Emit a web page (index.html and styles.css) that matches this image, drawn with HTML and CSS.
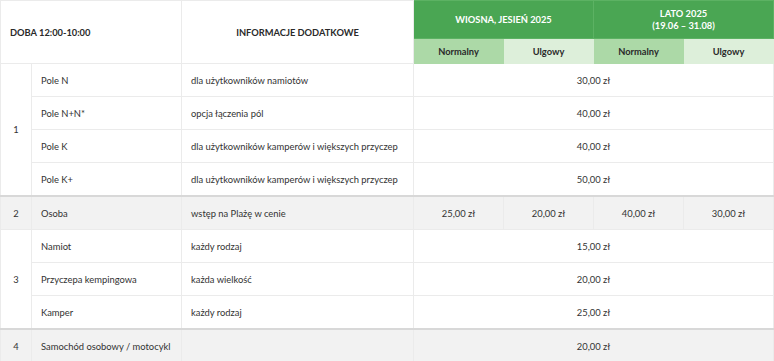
FILE: index.html
```html
<!DOCTYPE html>
<html lang="pl">
<head>
<meta charset="utf-8">
<link rel="stylesheet" href="styles.css">
</head>
<body>
<table class="prices">
  <colgroup>
    <col class="c-num"><col class="c-name"><col class="c-info">
    <col class="c-price"><col class="c-price"><col class="c-price"><col class="c-price">
  </colgroup>
  <thead>
    <tr class="head-top">
      <th colspan="2" rowspan="2" class="h-left">DOBA 12:00-10:00</th>
      <th rowspan="2" class="h-info">INFORMACJE DODATKOWE</th>
      <th colspan="2" class="h-season">WIOSNA, JESIEŃ 2025</th>
      <th colspan="2" class="h-season">LATO 2025<br>(19.06 – 31.08)</th>
    </tr>
    <tr class="head-sub">
      <th class="h-norm">Normalny</th>
      <th class="h-ulg">Ulgowy</th>
      <th class="h-norm">Normalny</th>
      <th class="h-ulg">Ulgowy</th>
    </tr>
  </thead>
  <tbody>
    <tr>
      <td rowspan="4" class="num">1</td>
      <td>Pole N</td><td>dla użytkowników namiotów</td>
      <td colspan="4" class="price">30,00 zł</td>
    </tr>
    <tr><td>Pole N+N*</td><td>opcja łączenia pól</td><td colspan="4" class="price">40,00 zł</td></tr>
    <tr><td>Pole K</td><td>dla użytkowników kamperów i większych przyczep</td><td colspan="4" class="price">40,00 zł</td></tr>
    <tr><td>Pole K+</td><td>dla użytkowników kamperów i większych przyczep</td><td colspan="4" class="price">50,00 zł</td></tr>
    <tr class="alt sep">
      <td class="num">2</td><td>Osoba</td><td>wstęp na Plażę w cenie</td>
      <td class="price">25,00 zł</td><td class="price">20,00 zł</td><td class="price">40,00 zł</td><td class="price">30,00 zł</td>
    </tr>
    <tr>
      <td rowspan="3" class="num">3</td>
      <td>Namiot</td><td>każdy rodzaj</td><td colspan="4" class="price">15,00 zł</td>
    </tr>
    <tr><td>Przyczepa kempingowa</td><td>każda wielkość</td><td colspan="4" class="price">20,00 zł</td></tr>
    <tr><td>Kamper</td><td>każdy rodzaj</td><td colspan="4" class="price">25,00 zł</td></tr>
    <tr class="alt sep last">
      <td class="num">4</td><td>Samochód osobowy / motocykl</td><td></td>
      <td colspan="4" class="price">20,00 zł</td>
    </tr>
  </tbody>
</table>
</body>
</html>
```

FILE: styles.css
```css
html, body {
  margin: 0;
  padding: 0;
  background: #ffffff;
}

body {
  font-family: Lato, "Open Sans", sans-serif;
  font-size: 9.4px;
  color: #333333;
}

.prices {
  border-collapse: collapse;
  table-layout: fixed;
  width: 774px;
}

.c-num { width: 31px; }
.c-name { width: 150px; }
.c-info { width: 232px; }
.c-price { width: 90px; }

.prices th,
.prices td {
  border: 1px solid #ebebeb;
  padding: 0 9px;
  text-align: left;
  vertical-align: middle;
  white-space: nowrap;
}

.prices th {
  font-weight: 700;
  font-size: 9.3px;
  color: #2a2a2a;
}

.head-top th { height: 37px; }
.head-sub th { height: 24px; text-align: center; }

.h-left { padding-left: 10px; }
.h-info { text-align: center !important; }

.h-season {
  background: #4aa653;
  color: #ffffff !important;
  text-align: center !important;
  border-color: #5cb263 !important;
  line-height: 12px;
}

.h-norm { background: #acd9a7; border-color: #acd9a7 !important; }
.h-ulg { background: #ddefda; border-color: #ddefda !important; }

.prices tbody td { height: 32px; }

.num { text-align: center !important; padding: 0 !important; }
.price { text-align: center !important; }

.alt td { background: #f2f2f2; }
.sep td { border-top: 2px solid #d8d8d8; }
.last td { border-bottom: 2px solid #d8d8d8; height: 30px; }
```
